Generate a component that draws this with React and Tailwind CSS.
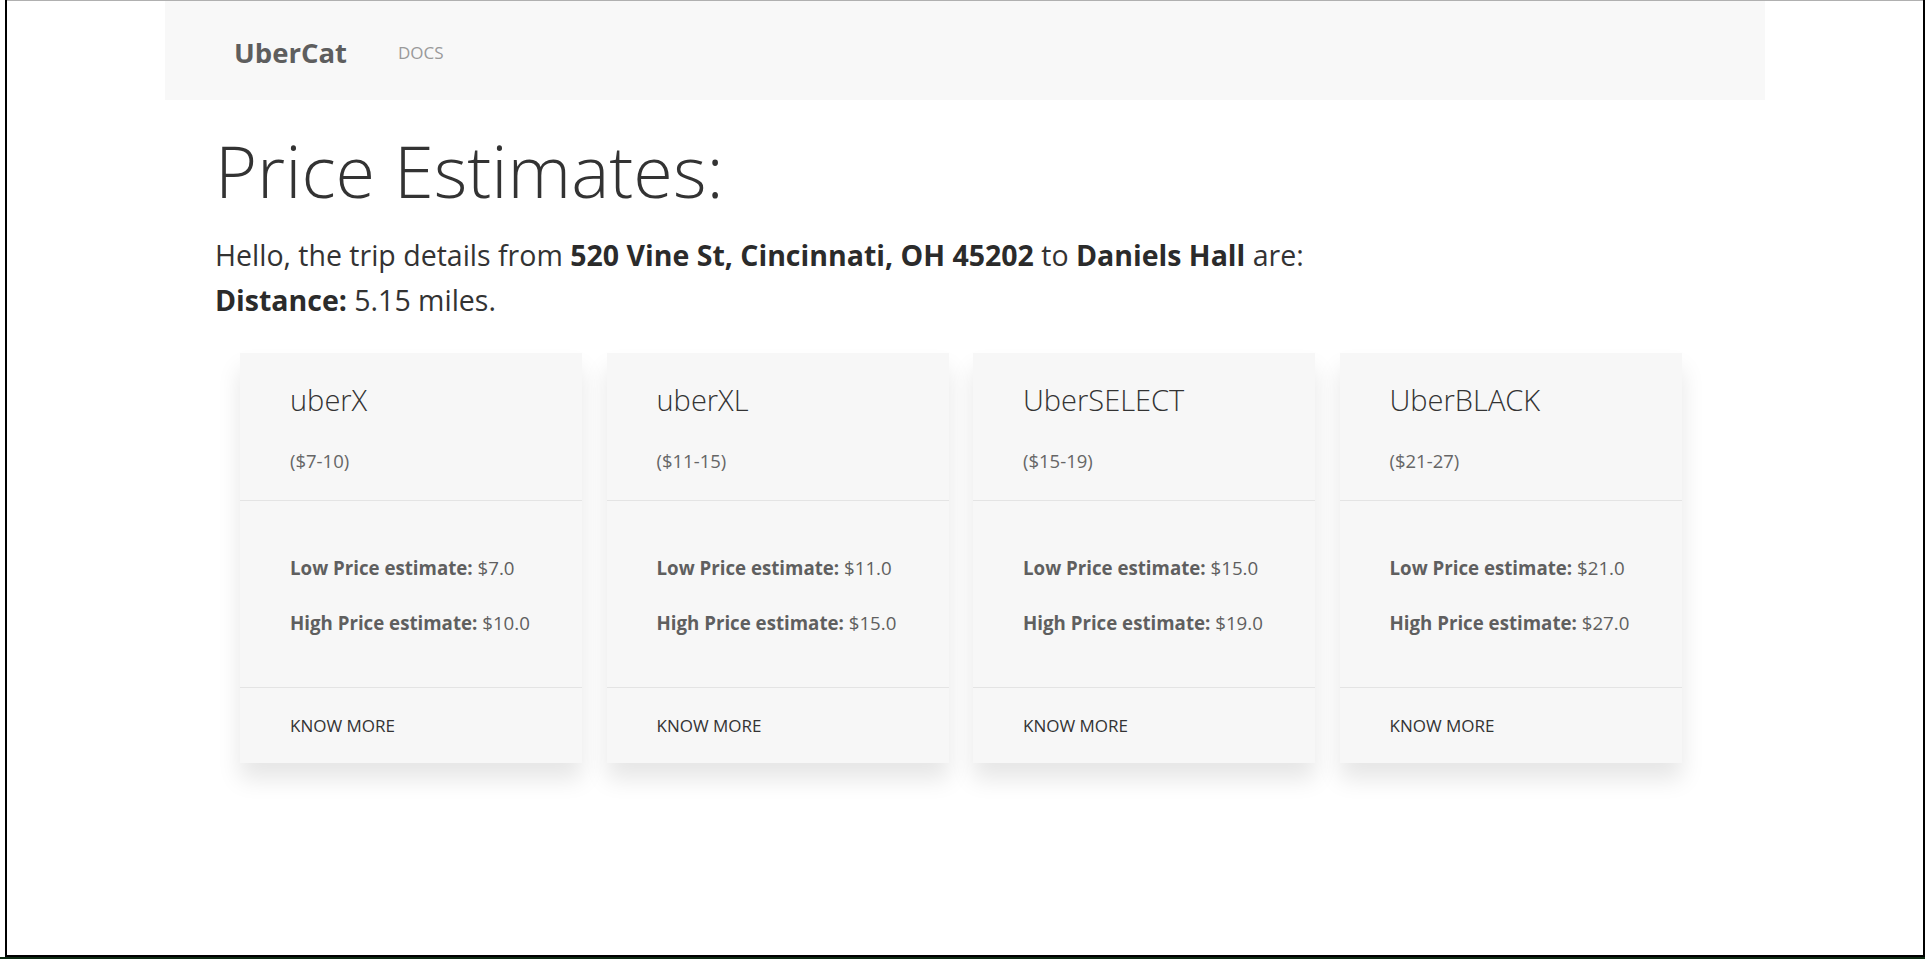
import React from "react";

const cars = [
  { name: "uberX", range: "($7-10)", low: "$7.0", high: "$10.0" },
  { name: "uberXL", range: "($11-15)", low: "$11.0", high: "$15.0" },
  { name: "UberSELECT", range: "($15-19)", low: "$15.0", high: "$19.0" },
  { name: "UberBLACK", range: "($21-27)", low: "$21.0", high: "$27.0" },
];

function Card({ c }) {
  return (
    <div className="w-[342px] bg-[#f7f7f7] shadow-[0_16px_22px_rgba(0,0,0,0.1)]">
      <div className="px-[50px] pt-[29px] pb-[27px]">
        <div className="text-[29px] leading-[36px] font-light text-[#333]">{c.name}</div>
        <div className="mt-[31px] text-[18.5px] leading-[24px] text-[#666]">{c.range}</div>
      </div>
      <div className="h-px bg-[#e4e4e4]" />
      <div className="px-[50px] pt-[53px] pb-[51px] text-[18.7px] leading-[27px] text-[#5f5f5f]">
        <div>
          <span className="font-bold">Low Price estimate:</span> {c.low}
        </div>
        <div className="mt-[28px]">
          <span className="font-bold">High Price estimate:</span> {c.high}
        </div>
      </div>
      <div className="h-px bg-[#e4e4e4]" />
      <div className="px-[50px] pt-[26px] pb-[25px] text-[17px] leading-[24px] text-[#333]">KNOW MORE</div>
    </div>
  );
}

export default function App() {
  return (
    <div className="w-[1925px] h-[959px] bg-white flex flex-col overflow-hidden font-['Open_Sans',sans-serif]">
      <div className="flex h-[955px]">
        <div className="w-[5px] bg-white" />
        <div className="flex-1 border-l-2 border-r-2 border-black flex flex-col">
          <div className="h-px bg-[#b0b0b0]" />
          <nav className="w-[1600px] mx-auto h-[99px] bg-[#f8f8f8] flex items-center pl-[69px] pt-[4px]">
            <span className="text-[27.5px] font-bold text-[#5e5e5e]">UberCat</span>
            <span className="ml-[51px] text-[17px] text-[#9a9a9a]">DOCS</span>
          </nav>
          <main className="w-[1600px] mx-auto px-[50px]">
            <h1 className="mt-[34px] h-[72px] text-[72px] leading-[72px] font-light text-[#333]">Price Estimates:</h1>
            <div className="mt-[27px] text-[28.5px] leading-[45px] text-[#333]">
              <div>
                Hello, the trip details from <b className="font-bold text-[#2b2b2b]">520 Vine St, Cincinnati, OH 45202</b> to{" "}
                <b className="font-bold text-[#2b2b2b]">Daniels Hall</b> are:
              </div>
              <div>
                <b className="font-bold text-[#2b2b2b]">Distance:</b> 5.15 miles.
              </div>
            </div>
            <div className="mt-[30px] pl-[25px] flex gap-[24.5px]">
              {cars.map((c) => (
                <Card key={c.name} c={c} />
              ))}
            </div>
          </main>
        </div>
      </div>
      <div className="h-[2px] bg-black ml-[5px]" />
      <div className="h-[2px] bg-[#0d2a12]" />
    </div>
  );
}
